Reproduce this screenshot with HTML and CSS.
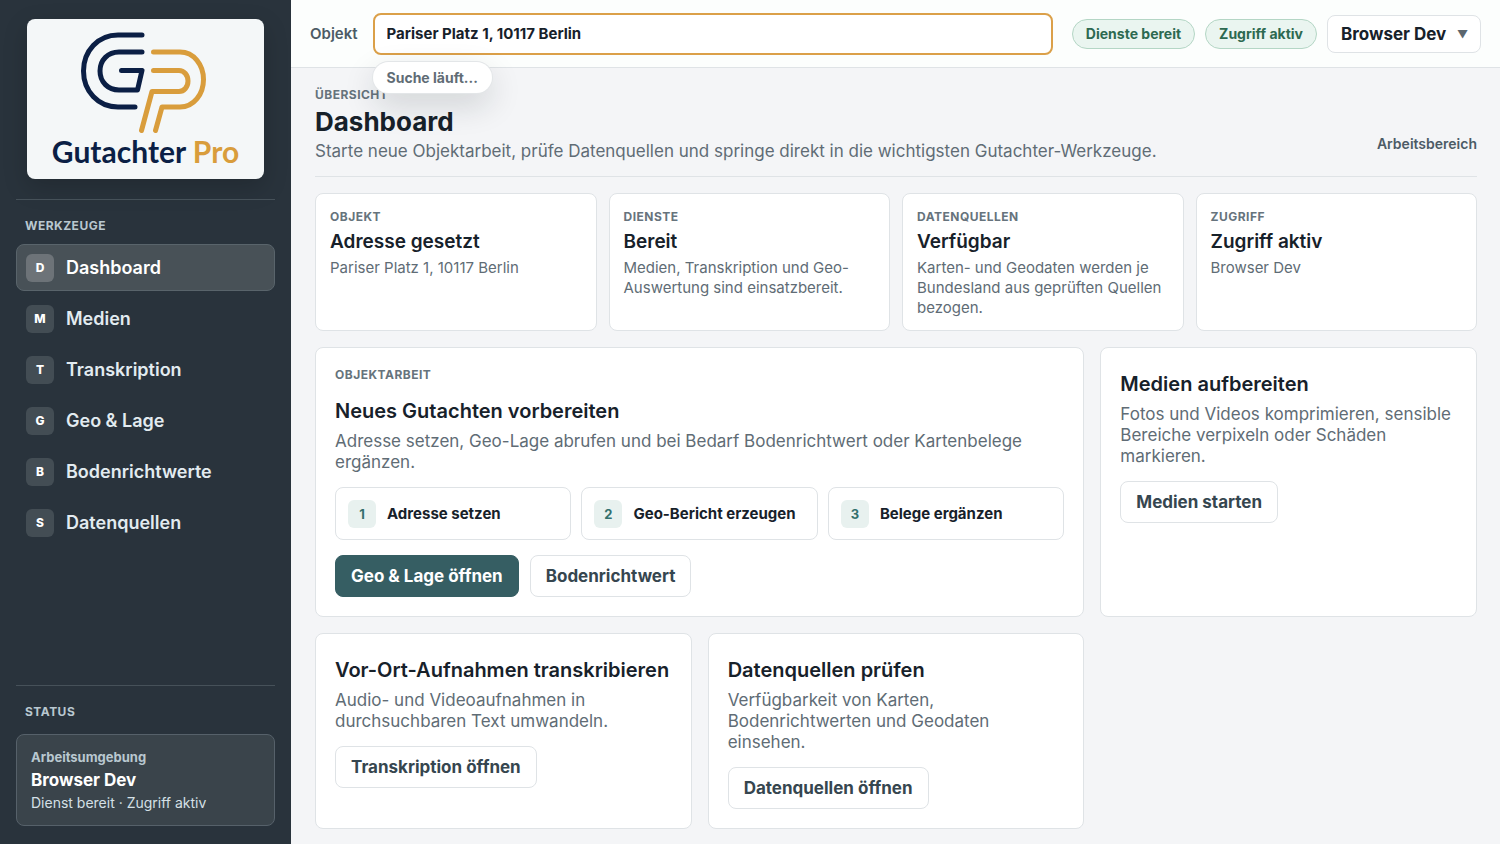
FILE: index.html
```html
<!DOCTYPE html>
<html lang="de">
<head>
    <meta charset="utf-8">
    <meta name="viewport" content="width=device-width, initial-scale=1">
    <title>Gutachter Pro</title>
    <link rel="stylesheet" href="styles.css">
</head>

<body>
<div class="app">
    <!-- Sidebar -->
    <aside class="sidebar">
        <div class="brand">
            <svg class="brand-mark" viewBox="80 31 131 102" width="131" height="102" fill="none" stroke-width="5" stroke-linecap="round" stroke-linejoin="round" aria-hidden="true">
                <g stroke="#0b1f45">
                    <path d="M142 35H118C98 35 83.500 51 83.500 71S98 107 118 107H135" />
                    <path d="M142 52H119C108 52 100 60 100 71S108 90 119 90H137.500L142 70.500H121.500" />
                </g>
                <g stroke="#d99d3c">
                    <path d="M153.500 52H180C194 52 203.500 65 203.500 79.500S194 107 180 107H162L155.500 130.500" />
                    <path d="M153.500 70.500H179C184 70.500 188 75 188 81S184 91.500 179 91.500H152L141.500 130.500" />
                </g>
            </svg>
            <div class="brand-name">Gutachter <span>Pro</span></div>
        </div>

        <div class="side-tools">
            <h2 class="side-label">WERKZEUGE</h2>
            <nav class="nav">
                <a class="nav-item active" href="#dashboard"><span class="nav-key">D</span>Dashboard</a>
                <a class="nav-item" href="#medien"><span class="nav-key">M</span>Medien</a>
                <a class="nav-item" href="#transkription"><span class="nav-key">T</span>Transkription</a>
                <a class="nav-item" href="#geo"><span class="nav-key">G</span>Geo &amp; Lage</a>
                <a class="nav-item" href="#bodenrichtwerte"><span class="nav-key">B</span>Bodenrichtwerte</a>
                <a class="nav-item" href="#datenquellen"><span class="nav-key">S</span>Datenquellen</a>
            </nav>
        </div>

        <div class="side-status">
            <h2 class="side-label">STATUS</h2>
            <div class="status-card">
                <span class="status-label">Arbeitsumgebung</span>
                <strong>Browser Dev</strong>
                <span class="status-text">Dienst bereit · Zugriff aktiv</span>
            </div>
        </div>
    </aside>

    <div class="content">
        <!-- Object search and account -->
        <header class="topbar">
            <label class="object-label" for="object">Objekt</label>
            <div class="search">
                <input class="search-input" id="object" type="text" value="Pariser Platz 1, 10117 Berlin">
                <div class="search-hint">Suche läuft...</div>
            </div>
            <div class="topbar-right">
                <span class="pill">Dienste bereit</span>
                <span class="pill">Zugriff aktiv</span>
                <div class="account">
                    <select class="account-select" aria-label="Konto">
                        <option>Browser Dev</option>
                    </select>
                    <span class="account-arrow" aria-hidden="true">▼</span>
                </div>
            </div>
        </header>

        <main class="main">
            <div class="page-head">
                <div>
                    <div class="eyebrow">ÜBERSICHT</div>
                    <h1>Dashboard</h1>
                    <p class="page-text">Starte neue Objektarbeit, prüfe Datenquellen und springe direkt in die wichtigsten Gutachter-Werkzeuge.</p>
                </div>
                <span class="page-tag">Arbeitsbereich</span>
            </div>

            <!-- Status overview -->
            <section class="stats">
                <div class="card stat">
                    <div class="eyebrow">OBJEKT</div>
                    <h3>Adresse gesetzt</h3>
                    <p>Pariser Platz 1, 10117 Berlin</p>
                </div>
                <div class="card stat">
                    <div class="eyebrow">DIENSTE</div>
                    <h3>Bereit</h3>
                    <p>Medien, Transkription und Geo-Auswertung sind einsatzbereit.</p>
                </div>
                <div class="card stat">
                    <div class="eyebrow">DATENQUELLEN</div>
                    <h3>Verfügbar</h3>
                    <p>Karten- und Geodaten werden je Bundesland aus geprüften Quellen bezogen.</p>
                </div>
                <div class="card stat">
                    <div class="eyebrow">ZUGRIFF</div>
                    <h3>Zugriff aktiv</h3>
                    <p>Browser Dev</p>
                </div>
            </section>

            <!-- Actions -->
            <section class="actions">
                <div class="card action action-wide">
                    <div class="eyebrow">OBJEKTARBEIT</div>
                    <h2>Neues Gutachten vorbereiten</h2>
                    <p>Adresse setzen, Geo-Lage abrufen und bei Bedarf Bodenrichtwert oder Kartenbelege ergänzen.</p>
                    <ol class="steps">
                        <li><span class="step-no">1</span>Adresse setzen</li>
                        <li><span class="step-no">2</span>Geo-Bericht erzeugen</li>
                        <li><span class="step-no">3</span>Belege ergänzen</li>
                    </ol>
                    <div class="buttons">
                        <button class="btn btn-primary" type="button">Geo &amp; Lage öffnen</button>
                        <button class="btn" type="button">Bodenrichtwert</button>
                    </div>
                </div>
                <div class="card action">
                    <h2>Medien aufbereiten</h2>
                    <p>Fotos und Videos komprimieren, sensible Bereiche verpixeln oder Schäden markieren.</p>
                    <button class="btn" type="button">Medien starten</button>
                </div>
                <div class="card action">
                    <h2>Vor-Ort-Aufnahmen transkribieren</h2>
                    <p>Audio- und Videoaufnahmen in durchsuchbaren Text umwandeln.</p>
                    <button class="btn" type="button">Transkription öffnen</button>
                </div>
                <div class="card action">
                    <h2>Datenquellen prüfen</h2>
                    <p>Verfügbarkeit von Karten, Bodenrichtwerten und Geodaten einsehen.</p>
                    <button class="btn" type="button">Datenquellen öffnen</button>
                </div>
            </section>
        </main>
    </div>
</div>
</body>

</html>
```

FILE: styles.css
```css
* {
    box-sizing: border-box;
}
body {
    margin: 0;
    font-family: Inter, "Liberation Sans", sans-serif;
    font-size: 17px;
    color: #17212a;
    background: #f4f5f7;
}
h1, h2, h3, p, ol {
    margin: 0;
    padding: 0;
}
button, input, select {
    font: inherit;
}

.app {
    display: grid;
    grid-template-columns: 291px 1fr;
    min-height: 100vh;
}

/* Sidebar */
.sidebar {
    display: flex;
    flex-direction: column;
    padding: 19px 16px 18px;
    background: #29333c;
    color: #e6edf2;
}
.brand {
    display: flex;
    flex-direction: column;
    align-items: center;
    height: 160px;
    margin: 0 11px 20px;
    padding-top: 12px;
    background: #f4f7f8;
    border-radius: 8px;
    box-shadow: 0 8px 24px rgba(0, 0, 0, 0.18);
}
.brand-mark {
    flex: none;
}
.brand-name {
    font-family: Lato, sans-serif;
    font-size: 30px;
    line-height: 36px;
    font-weight: 700;
    color: #0b1f45;
}
.brand-name span {
    color: #d99d3c;
}
.side-tools {
    border-top: 1px solid #465159;
    padding-top: 18px;
}
.side-label {
    margin: 0 9px 10px;
    font-size: 12px;
    line-height: 16px;
    font-weight: 700;
    letter-spacing: 0.04em;
    color: #b9c8d0;
}
.nav {
    display: flex;
    flex-direction: column;
    gap: 4px;
}
.nav-item {
    display: flex;
    align-items: center;
    gap: 12px;
    height: 47px;
    padding: 0 9px;
    border: 1px solid transparent;
    border-radius: 8px;
    color: #e2ebf0;
    font-size: 18px;
    font-weight: 600;
    text-decoration: none;
}
.nav-item.active {
    background: #485157;
    border-color: #59646b;
    color: #fff;
}
.nav-key {
    display: grid;
    place-items: center;
    width: 28px;
    height: 28px;
    border-radius: 6px;
    background: #434d54;
    color: #fff;
    font-size: 12px;
    font-weight: 800;
}
.active .nav-key {
    background: #6d7378;
}
.side-status {
    margin-top: auto;
    border-top: 1px solid #465159;
    padding-top: 18px;
}
.side-status .side-label {
    margin-bottom: 14px;
}
.status-card {
    display: flex;
    flex-direction: column;
    padding: 11px 14px;
    border: 1px solid #56616a;
    border-radius: 8px;
    background: #3a444b;
}
.status-card strong {
    font-size: 17px;
    line-height: 24px;
    color: #fff;
}
.status-label {
    font-size: 13px;
    line-height: 22px;
    font-weight: 700;
    color: #b9c8d0;
}
.status-text {
    font-size: 14px;
    line-height: 22px;
    color: #d5e0e6;
}

/* Top bar */
.topbar {
    display: flex;
    align-items: center;
    height: 68px;
    padding: 0 19px;
    background: #fcfefd;
    border-bottom: 1px solid #dfe3e6;
}
.object-label {
    margin-right: 15px;
    font-size: 15px;
    font-weight: 600;
    color: #4c5b66;
}
.search {
    position: relative;
    flex: 1;
}
.search-input {
    display: block;
    width: 100%;
    height: 42px;
    padding: 0 12px;
    border: 2px solid #dba049;
    border-radius: 8px;
    outline: none;
    background: #fff;
    color: #17212a;
    font-size: 15px;
    font-weight: 700;
}
.search-hint {
    position: absolute;
    top: 49px;
    left: 0;
    padding: 0 14px;
    border-radius: 16px;
    background: #fff;
    box-shadow: 0 0 0 1px #e3e6e8, 0 12px 32px rgba(20, 30, 40, 0.16);
    font-size: 14px;
    line-height: 31px;
    font-weight: 700;
    color: #606c75;
}
.topbar-right {
    display: flex;
    align-items: center;
    gap: 10px;
    margin-left: 19px;
}
.pill {
    padding: 0 13px;
    border: 1px solid #b4d6c5;
    border-radius: 15px;
    background: #eaf5f0;
    color: #2d6950;
    font-size: 14px;
    line-height: 28px;
    font-weight: 700;
}
.account {
    display: flex;
    align-items: center;
    position: relative;
    height: 38px;
    border: 1px solid #dfe3e6;
    border-radius: 8px;
    background: #fff;
}
.account-select {
    appearance: none;
    height: 36px;
    padding: 0 33px 0 13px;
    border: 0;
    background: transparent;
    color: #17212a;
    font-size: 17px;
    font-weight: 700;
}
.account-arrow {
    position: absolute;
    right: 12px;
    font-size: 11px;
    color: #5b666e;
    pointer-events: none;
}

/* Page head */
.main {
    padding: 18px 23px 15px 24px;
}
.page-head {
    display: flex;
    align-items: flex-end;
    justify-content: space-between;
    margin-bottom: 16px;
    padding-bottom: 13px;
    border-bottom: 1px solid #dfe3e6;
}
.eyebrow {
    font-size: 12px;
    line-height: 18px;
    font-weight: 700;
    letter-spacing: 0.04em;
    color: #66737c;
}
h1 {
    font-size: 26px;
    line-height: 36px;
    font-weight: 700;
}
.page-text {
    line-height: 23px;
    color: #606c75;
}
.page-tag {
    font-size: 14px;
    line-height: 38px;
    font-weight: 600;
    color: #4c5b66;
}

/* Cards */
.card {
    border: 1px solid #dfe3e6;
    border-radius: 8px;
    background: #fff;
}
.stats {
    display: grid;
    grid-template-columns: repeat(4, 1fr);
    gap: 12px;
    margin-bottom: 16px;
}
.stat {
    padding: 14px 14px 12px;
}
.stat h3 {
    font-size: 19px;
    line-height: 32px;
    font-weight: 600;
}
.stat p {
    font-size: 15px;
    line-height: 20px;
    color: #606c75;
}
.actions {
    display: grid;
    grid-template-columns: repeat(3, 1fr);
    gap: 16px;
}
.action {
    padding: 18px 19px 19px;
}
.action-wide {
    grid-column: span 2;
}
.action h2 {
    margin-bottom: 2px;
    font-size: 20px;
    line-height: 36px;
    font-weight: 600;
}
.action .eyebrow + h2 {
    margin-top: 9px;
}
.action p {
    margin-bottom: 14px;
    line-height: 21px;
    color: #606c75;
}
.steps {
    display: grid;
    grid-template-columns: repeat(3, 1fr);
    gap: 10px;
    margin-bottom: 15px;
    list-style: none;
}
.steps li {
    display: flex;
    align-items: center;
    gap: 11px;
    height: 53px;
    padding: 0 12px;
    border: 1px solid #dfe3e6;
    border-radius: 8px;
    font-size: 15px;
    font-weight: 700;
}
.step-no {
    display: grid;
    place-items: center;
    width: 28px;
    height: 28px;
    border-radius: 6px;
    background: #e8f1ef;
    color: #33706d;
    font-size: 13px;
    font-weight: 700;
}
.buttons {
    display: flex;
    gap: 11px;
}
.btn {
    height: 42px;
    padding: 0 15px;
    border: 1px solid #dfe3e6;
    border-radius: 8px;
    background: #fff;
    color: #36464f;
    font-size: 17px;
    font-weight: 700;
    cursor: pointer;
}
.btn-primary {
    background: #365e63;
    border-color: #365e63;
    color: #fff;
}
```
